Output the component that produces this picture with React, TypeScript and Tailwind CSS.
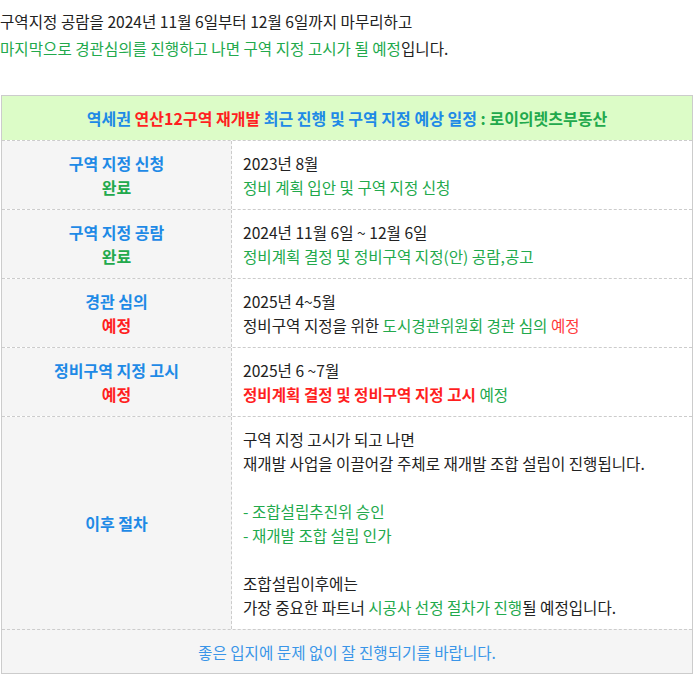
const blue = "text-[#1e8ae6]";
const green = "text-[#22a94c]";
const red = "text-[#ff1f1f]";

interface Row {
  title: string;
  status: string;
  done: boolean;
  body: React.ReactNode;
}

const rows: Row[] = [
  {
    title: "구역 지정 신청",
    status: "완료",
    done: true,
    body: (
      <>
        <p>2023년 8월</p>
        <p className={green}>정비 계획 입안 및 구역 지정 신청</p>
      </>
    ),
  },
  {
    title: "구역 지정 공람",
    status: "완료",
    done: true,
    body: (
      <>
        <p>2024년 11월 6일 ~ 12월 6일</p>
        <p className={green}>정비계획 결정 및 정비구역 지정(안) 공람,공고</p>
      </>
    ),
  },
  {
    title: "경관 심의",
    status: "예정",
    done: false,
    body: (
      <>
        <p>2025년 4~5월</p>
        <p>
          정비구역 지정을 위한 <span className={green}>도시경관위원회 경관 심의</span>{" "}
          <span className="text-[#ff3b3b]">예정</span>
        </p>
      </>
    ),
  },
  {
    title: "정비구역 지정 고시",
    status: "예정",
    done: false,
    body: (
      <>
        <p>2025년 6 ~7월</p>
        <p>
          <span className={`${red} font-bold`}>정비계획 결정 및 정비구역 지정 고시</span>{" "}
          <span className={green}>예정</span>
        </p>
      </>
    ),
  },
];

export default function App() {
  return (
    <div className="min-h-screen bg-white font-['Noto_Sans_CJK_KR',sans-serif] text-[15.6px] text-[#222]">
      <div className="pt-[8px] leading-[27px]">
        <p>구역지정 공람을 2024년 11월 6일부터 12월 6일까지 마무리하고</p>
        <p>
          <span className={green}>마지막으로 경관심의를 진행하고 나면 구역 지정 고시가 될 예정</span>
          입니다.
        </p>
      </div>

      <div className="mx-[1px] mt-[33px] w-[692px] border border-[#cccccc] leading-[24px]">
        <div className="flex h-[44px] items-center justify-center bg-[#dcfcc7] text-[16px] font-bold">
          <span className={blue}>역세권&nbsp;</span>
          <span className={red}>연산12구역 재개발&nbsp;</span>
          <span className={blue}>최근 진행 및 구역 지정 예상 일정&nbsp;</span>
          <span className={green}>: 로이의렛츠부동산</span>
        </div>

        {rows.map((r) => (
          <div key={r.title} className="flex border-t border-dashed border-[#cccccc]">
            <div className="flex w-[230px] shrink-0 flex-col items-center justify-center border-r border-dashed border-[#cccccc] bg-[#f5f5f5] py-[10px] text-[16px] font-bold">
              <p className={blue}>{r.title}</p>
              <p className={r.done ? green : red}>{r.status}</p>
            </div>
            <div className="py-[10px] pl-[11px]">{r.body}</div>
          </div>
        ))}

        <div className="flex border-t border-dashed border-[#cccccc]">
          <div className="flex w-[230px] shrink-0 items-center justify-center border-r border-dashed border-[#cccccc] bg-[#f5f5f5] text-[16px] font-bold">
            <p className={blue}>이후 절차</p>
          </div>
          <div className="py-[10px] pl-[11px]">
            <p>구역 지정 고시가 되고 나면</p>
            <p>재개발 사업을 이끌어갈 주체로 재개발 조합 설립이 진행됩니다.</p>
            <p>&nbsp;</p>
            <p className={green}>- 조합설립추진위 승인</p>
            <p className={green}>- 재개발 조합 설립 인가</p>
            <p>&nbsp;</p>
            <p>조합설립이후에는</p>
            <p>
              가장 중요한 파트너 <span className={green}>시공사 선정 절차가 진행</span>될 예정입니다.
            </p>
          </div>
        </div>

        <div className="flex h-[44px] items-center justify-center border-t border-dashed border-[#cccccc] bg-[#f5f5f5]">
          <p className="text-[#3a95e8]">좋은 입지에 문제 없이 잘 진행되기를 바랍니다.</p>
        </div>
      </div>
    </div>
  );
}
